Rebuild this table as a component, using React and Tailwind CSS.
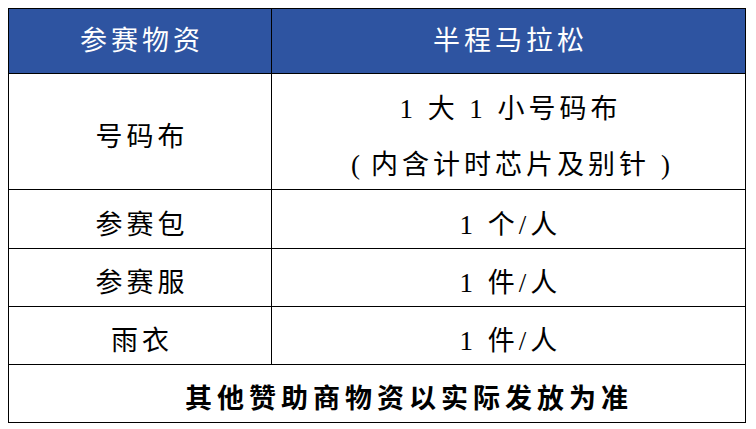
export default function App() {
  const font = { fontFamily: '"Liberation Serif", "Noto Sans CJK SC", serif' };
  const rows = [
    { a: "参赛包", b: "1 个/人", h: "h-[59px]" },
    { a: "参赛服", b: "1 件/人", h: "h-[58px]" },
    { a: "雨衣", b: "1 件/人", h: "h-[58px]" },
  ];
  return (
    <div className="w-[756px] h-[429px] bg-white pt-[8px] pl-[8px]" style={font}>
      <div className="w-[738px] border border-black flex flex-col text-[27px] text-black">
        <div className="flex h-[64px] bg-[#2e54a1] text-white">
          <div className="w-[263px] border-r border-black flex items-center justify-center tracking-[4px] pl-[4px]">参赛物资</div>
          <div className="flex-1 flex items-center justify-center tracking-[4px] pl-[4px]">半程马拉松</div>
        </div>
        <div className="flex h-[116px] border-t border-black">
          <div className="w-[263px] border-r border-black flex items-center justify-center tracking-[4px] pl-[4px] pt-[12px]">号码布</div>
          <div className="flex-1 flex flex-col items-center justify-center leading-[56px] tracking-[4px] pl-[4px] pt-[10px]">
            <div>1 大 1 小号码布</div>
            <div className="flex">
              <span className="inline-block w-[31px] text-center tracking-normal">(</span>
              <span>内含计时芯片及别针</span>
              <span className="inline-block w-[31px] text-center tracking-normal">)</span>
            </div>
          </div>
        </div>
        {rows.map((r, i) => (
          <div key={i} className={`flex ${r.h} border-t border-black`}>
            <div className="w-[263px] border-r border-black flex items-center justify-center tracking-[4px] pl-[4px] pt-[12px]">{r.a}</div>
            <div className="flex-1 flex items-center justify-center tracking-[4px] pl-[4px] pt-[12px]">{r.b}</div>
          </div>
        ))}
        <div className="flex h-[58px] border-t border-black items-center justify-center font-bold tracking-[5px] pl-[64px] pt-[12px]">
          其他赞助商物资以实际发放为准
        </div>
      </div>
    </div>
  );
}
